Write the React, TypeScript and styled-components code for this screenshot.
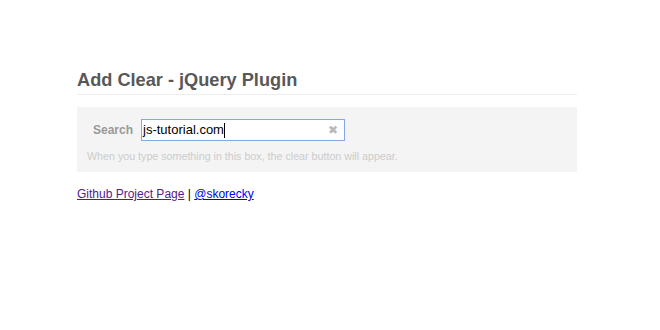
import React from "react";
import styled, { createGlobalStyle } from "styled-components";

const Global = createGlobalStyle`
  html, body { margin: 0; padding: 0; background: #fff; }
  body { font-family: "Liberation Sans", Arial, sans-serif; }
`;

const Page = styled.div`
  width: 500px;
  margin-left: 77px;
  padding-top: 70px;
`;

const Title = styled.h1`
  margin: 0;
  font-size: 18.2px;
  line-height: 20px;
  font-weight: bold;
  color: #585858;
  padding-bottom: 4px;
  border-bottom: 1px solid #eeeeee;
`;

const Panel = styled.div`
  margin-top: 12px;
  background: #f4f4f4;
  height: 65px;
  box-sizing: border-box;
  padding: 12px 0 0 10px;
`;

const Row = styled.div`
  display: flex;
  align-items: center;
  gap: 8px;
  padding-left: 6px;
`;

const Label = styled.label`
  font-size: 12px;
  font-weight: bold;
  color: #999999;
`;

const Field = styled.div`
  position: relative;
  width: 204px;
  height: 22px;
  box-sizing: border-box;
  border: 1px solid #86a8e6;
  background: #fff;
  display: flex;
  align-items: center;
  padding-left: 1px;
`;

const Value = styled.span`
  font-size: 13px;
  color: #000;
  line-height: 18px;
`;

const Caret = styled.span`
  display: inline-block;
  width: 1px;
  height: 15px;
  background: #000;
  vertical-align: -3px;
`;

const ClearBtn = styled.span`
  position: absolute;
  right: 6px;
  top: 3px;
  font-size: 12px;
  line-height: 14px;
  color: #b8b8b8;
  font-family: "DejaVu Sans", sans-serif;
`;

const Help = styled.p`
  margin: 9px 0 0;
  font-size: 10.7px;
  line-height: 12px;
  color: #cccccc;
`;

const Links = styled.p`
  margin: 15px 0 0;
  font-size: 12px;
  line-height: 14px;
  color: #000;
`;

const Link = styled.a<{ $visited?: boolean }>`
  color: ${(p) => (p.$visited ? "#551a8b" : "#0000ee")};
  text-decoration: underline;
`;

export default function App() {
  return (
    <>
      <Global />
      <Page>
        <Title>Add Clear - jQuery Plugin</Title>
        <Panel>
          <Row>
            <Label>Search</Label>
            <Field>
              <Value>js-tutorial.com</Value>
              <Caret />
              <ClearBtn>✖</ClearBtn>
            </Field>
          </Row>
          <Help>When you type something in this box, the clear button will appear.</Help>
        </Panel>
        <Links>
          <Link $visited href="#">Github Project Page</Link> | <Link href="#">@skorecky</Link>
        </Links>
      </Page>
    </>
  );
}
